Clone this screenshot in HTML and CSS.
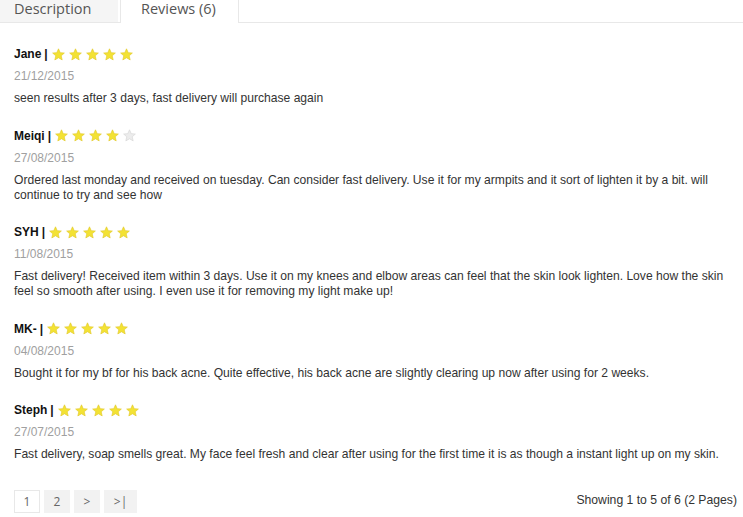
FILE: index.html
```html
<!DOCTYPE html>
<html>
<head>
<meta charset="utf-8">
<link rel="stylesheet" href="styles.css">
</head>
<body>
<div class="tabs">
  <div class="tab">Description</div>
  <div class="tab active">Reviews (6)</div>
  <div class="tab-fill"></div>
</div>
<div class="content">
  <div class="review">
    <div class="head"><b>Jane</b> <span class="sep">|</span><span class="stars" data-n="5"></span></div>
    <div class="date">21/12/2015</div>
    <div class="text">seen results after 3 days, fast delivery will purchase again</div>
  </div>
  <div class="review">
    <div class="head"><b>Meiqi</b> <span class="sep">|</span><span class="stars" data-n="4"></span></div>
    <div class="date">27/08/2015</div>
    <div class="text">Ordered last monday and received on tuesday. Can consider fast delivery. Use it for my armpits and it sort of lighten it by a bit. will continue to try and see how</div>
  </div>
  <div class="review">
    <div class="head"><b>SYH</b> <span class="sep">|</span><span class="stars" data-n="5"></span></div>
    <div class="date">11/08/2015</div>
    <div class="text">Fast delivery! Received item within 3 days. Use it on my knees and elbow areas can feel that the skin look lighten. Love how the skin feel so smooth after using. I even use it for removing my light make up!</div>
  </div>
  <div class="review">
    <div class="head"><b>MK-</b> <span class="sep">|</span><span class="stars" data-n="5"></span></div>
    <div class="date">04/08/2015</div>
    <div class="text">Bought it for my bf for his back acne. Quite effective, his back acne are slightly clearing up now after using for 2 weeks.</div>
  </div>
  <div class="review">
    <div class="head"><b>Steph</b> <span class="sep">|</span><span class="stars" data-n="5"></span></div>
    <div class="date">27/07/2015</div>
    <div class="text">Fast delivery, soap smells great. My face feel fresh and clear after using for the first time it is as though a instant light up on my skin.</div>
  </div>
  <div class="footer">
    <div class="pages">
      <span class="pg current">1</span>
      <span class="pg">2</span>
      <span class="pg">&gt;</span>
      <span class="pg wide">&gt;|</span>
    </div>
    <div class="showing">Showing 1 to 5 of 6 (2 Pages)</div>
  </div>
</div>
<script>
var STAR = '<svg width="13" height="13" viewBox="0 0 24 24"><path d="M12 1.5l3.2 7.1 7.6.7-5.8 5.1 1.8 7.6L12 18l-6.8 4 1.8-7.6-5.8-5.1 7.6-.7z" fill="FILL" stroke="STROKE" stroke-width="1.2" stroke-linejoin="round"/></svg>';
document.querySelectorAll('.stars').forEach(function(el){
  var n = +el.getAttribute('data-n'), h = '';
  for (var i = 0; i < 5; i++) {
    h += '<span class="star">' + (i < n ? STAR.replace('FILL','#f3e234').replace('STROKE','#e2c92a') : STAR.replace('FILL','#ececec').replace('STROKE','#d6d6d6')) + '</span>';
  }
  el.innerHTML = h;
});
</script>
</body>
</html>
```
FILE: styles.css
```css
html, body { margin: 0; padding: 0; background: #fff; }
body { font-family: "Liberation Sans", Arial, sans-serif; font-size: 12px; color: #333; }
.tabs { display: flex; height: 22px; border-bottom: 1px solid #e8e8e8; }
.tab { font-family: "Open Sans", sans-serif; font-size: 14.5px; color: #555; line-height: 18px; height: 22px; padding: 0 14px; width: 90px; background: #f5f5f5; box-sizing: content-box; }
.tab.active { background: #fff; border-left: 1px solid #e8e8e8; border-right: 1px solid #e8e8e8; height: 23px; margin-left: 2px; padding: 0 20px; width: 77px; }
.tab-fill { flex: 1; }
.content { padding: 20px 6px 0 14px; }
.review { margin-bottom: 18.5px; }
.head { display: flex; align-items: center; height: 22px; color: #111; }
.head b { font-weight: bold; }
.sep { font-weight: bold; margin-left: 3px; margin-right: 4px; }
.stars { display: flex; gap: 4px; }
.star { display: block; width: 13px; height: 13px; }
.star svg { display: block; }
.date { color: #a0a0a0; line-height: 22px; }
.text { line-height: 15px; padding-top: 4px; font-size: 12.1px; }
.footer { display: flex; justify-content: space-between; align-items: flex-start; margin-top: 28px; }
.pages { display: flex; gap: 4px; }
.pg { font-family: "Open Sans", sans-serif; font-size: 12px; color: #666; background: #f2f2f2; width: 26px; height: 23px; line-height: 23px; text-align: center; box-sizing: border-box; }
.pg.current { background: #fff; border: 1px solid #e8e8e8; line-height: 21px; }
.pg.wide { width: 33px; }
.showing { color: #333; padding-top: 3px; line-height: 14px; font-size: 12.2px; }
```
